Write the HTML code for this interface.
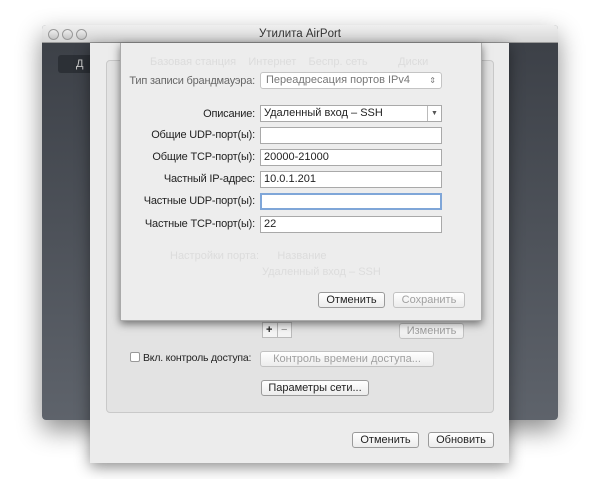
<!DOCTYPE html>
<html><head><meta charset="utf-8"><style>
*{box-sizing:border-box;margin:0;padding:0}
body{width:600px;height:479px;background:#fff;position:relative;overflow:hidden;font-family:"Liberation Sans","DejaVu Sans",sans-serif;font-size:11px;color:#222}
.abs{position:absolute}
.outer{left:42px;top:25px;width:516px;height:395px;background:linear-gradient(#3b3f46,#5e636b);border-radius:4px;box-shadow:0 10px 25px rgba(0,0,0,.45)}
.title{left:42px;top:25px;width:516px;height:18px;background:linear-gradient(#efefef,#d6d6d6);border-radius:4px 4px 0 0;text-align:center;line-height:18px;font-size:11.5px;color:#333;border-bottom:1px solid #999}
.tl{top:29px;width:11px;height:11px;border-radius:50%;border:1px solid #999;background:linear-gradient(#eee,#c4c4c4)}
.sheet{left:90px;top:43px;width:419px;height:420px;background:#ececec;box-shadow:0 4px 14px rgba(0,0,0,.45)}
.group{left:106px;top:60px;width:388px;height:353px;background:#e3e3e3;border:1px solid #c9c9c9;border-radius:4px}
.dlg{left:120px;top:43px;width:362px;height:278px;background:#ededed;box-shadow:0 3px 8px rgba(0,0,0,.5);border:1px solid #aaa;border-top:none}
.lbl{text-align:right;width:140px;left:115px;line-height:16px;letter-spacing:-.2px}
.fld{left:260px;width:182px;height:17px;background:#fff;border:1px solid #a9a9a9;line-height:15px;padding-left:3px;font-size:11px}
.btn{height:16px;border:1px solid #9a9a9a;border-radius:3px;background:linear-gradient(#fff,#ececec);text-align:center;line-height:14px;font-size:11px}
.dis{color:#a0a0a0;border-color:#c2c2c2}
.ghost{color:#dcdcdc}
</style></head><body>
<div class="abs outer"></div>
<div class="abs" style="left:58px;top:55px;width:40px;height:18px;background:#2c3036;border-radius:3px;color:#ccc;line-height:18px;padding-left:18px">Д</div>
<div class="abs title">Утилита AirPort</div>
<div class="abs tl" style="left:48px"></div><div class="abs tl" style="left:62px"></div><div class="abs tl" style="left:76px"></div>
<div class="abs sheet"></div>
<div class="abs group"></div>
<div class="abs" style="left:262px;top:322px;width:30px;height:16px;border:1px solid #bbb;background:#f4f4f4"></div>
<div class="abs" style="left:266px;top:322px;line-height:16px;font-weight:bold">+</div>
<div class="abs" style="left:277px;top:322px;width:1px;height:16px;background:#bbb"></div>
<div class="abs" style="left:281px;top:322px;line-height:16px;color:#888">−</div>
<div class="abs btn dis" style="left:399px;top:323px;width:65px">Изменить</div>
<div class="abs" style="left:130px;top:352px;width:10px;height:10px;border:1px solid #999;background:#fff;border-radius:2px"></div>
<div class="abs" style="left:143px;top:350px;line-height:16px;font-size:10.5px;letter-spacing:-.2px">Вкл. контроль доступа:</div>
<div class="abs btn dis" style="left:260px;top:351px;width:174px">Контроль времени доступа...</div>
<div class="abs btn" style="left:261px;top:380px;width:108px">Параметры сети...</div>
<div class="abs btn" style="left:352px;top:432px;width:67px">Отменить</div>
<div class="abs btn" style="left:428px;top:432px;width:66px">Обновить</div>
<div class="abs dlg"></div>
<div class="abs ghost" style="left:150px;top:56px">Базовая станция &nbsp;&nbsp; Интернет &nbsp;&nbsp; Беспр. сеть &nbsp;&nbsp;&nbsp;&nbsp;&nbsp;&nbsp;&nbsp;&nbsp; Диски</div>
<div class="abs lbl" style="top:73px;color:#666;left:110px;width:145px">Тип записи брандмауэра:</div>
<div class="abs fld" style="top:72px;border-color:#c4c4c4;color:#777;border-radius:3px;padding-left:5px">Переадресация портов IPv4<span style="float:right;padding-right:5px;font-size:8px">⇕</span></div>
<div class="abs lbl" style="top:106px">Описание:</div>
<div class="abs fld" style="top:105px">Удаленный вход – SSH<span style="position:absolute;right:0;top:0;width:14px;height:15px;border-left:1px solid #bbb;font-size:7px;text-align:center;color:#555">▼</span></div>
<div class="abs lbl" style="top:127px">Общие UDP-порт(ы):</div>
<div class="abs fld" style="top:127px"></div>
<div class="abs lbl" style="top:149px">Общие TCP-порт(ы):</div>
<div class="abs fld" style="top:149px">20000-21000</div>
<div class="abs lbl" style="top:171px">Частный IP-адрес:</div>
<div class="abs fld" style="top:171px">10.0.1.201</div>
<div class="abs lbl" style="top:193px">Частные UDP-порт(ы):</div>
<div class="abs fld" style="top:193px;border:2px solid #7fa6d8"></div>
<div class="abs lbl" style="top:216px">Частные TCP-порт(ы):</div>
<div class="abs fld" style="top:216px">22</div>
<div class="abs ghost" style="left:170px;top:250px">Настройки порта: &nbsp;&nbsp;&nbsp;&nbsp; Название</div>
<div class="abs ghost" style="left:262px;top:266px">Удаленный вход – SSH</div>
<div class="abs btn" style="left:318px;top:292px;width:67px">Отменить</div>
<div class="abs btn dis" style="left:393px;top:292px;width:72px">Сохранить</div>
</body></html>
